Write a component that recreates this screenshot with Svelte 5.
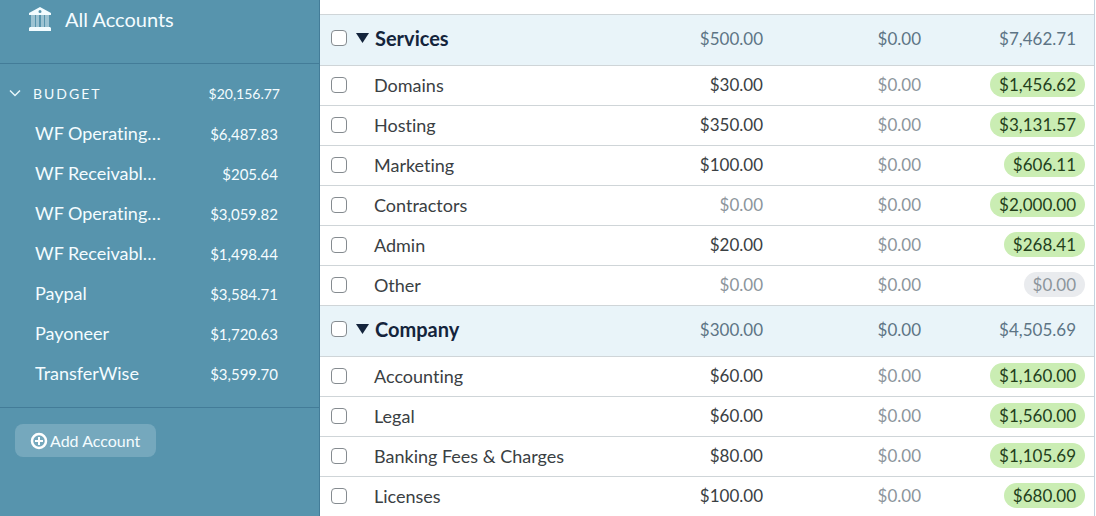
<script lang="ts">
  type Account = { name: string; balance: string };
  type Category = { name: string; budgeted: string; activity: string; available: string };
  type Group = Category & { items: Category[] };

  const accounts: Account[] = [
    { name: 'WF Operating…', balance: '$6,487.83' },
    { name: 'WF Receivabl…', balance: '$205.64' },
    { name: 'WF Operating…', balance: '$3,059.82' },
    { name: 'WF Receivabl…', balance: '$1,498.44' },
    { name: 'Paypal', balance: '$3,584.71' },
    { name: 'Payoneer', balance: '$1,720.63' },
    { name: 'TransferWise', balance: '$3,599.70' },
  ];

  const groups: Group[] = [
    {
      name: 'Services',
      budgeted: '$500.00',
      activity: '$0.00',
      available: '$7,462.71',
      items: [
        { name: 'Domains', budgeted: '$30.00', activity: '$0.00', available: '$1,456.62' },
        { name: 'Hosting', budgeted: '$350.00', activity: '$0.00', available: '$3,131.57' },
        { name: 'Marketing', budgeted: '$100.00', activity: '$0.00', available: '$606.11' },
        { name: 'Contractors', budgeted: '$0.00', activity: '$0.00', available: '$2,000.00' },
        { name: 'Admin', budgeted: '$20.00', activity: '$0.00', available: '$268.41' },
        { name: 'Other', budgeted: '$0.00', activity: '$0.00', available: '$0.00' },
      ],
    },
    {
      name: 'Company',
      budgeted: '$300.00',
      activity: '$0.00',
      available: '$4,505.69',
      items: [
        { name: 'Accounting', budgeted: '$60.00', activity: '$0.00', available: '$1,160.00' },
        { name: 'Legal', budgeted: '$60.00', activity: '$0.00', available: '$1,560.00' },
        { name: 'Banking Fees & Charges', budgeted: '$80.00', activity: '$0.00', available: '$1,105.69' },
        { name: 'Licenses', budgeted: '$100.00', activity: '$0.00', available: '$680.00' },
      ],
    },
  ];

  let budgetOpen = $state(true);
  let open: Record<string, boolean> = $state({ Services: true, Company: true });

  const isZero = (amount: string) => amount === '$0.00';
</script>

<div class="app">
  <aside class="sidebar">
    <nav class="top">
      <a class="all" href="#accounts">
        <svg width="24" height="26" viewBox="0 0 24 26" fill="#f2fcff" aria-hidden="true">
          <path fill-rule="evenodd" d="M12 1 23 7V9H1V7ZM12 4a1.500 1.500 0 1 0 0 3 1.500 1.500 0 0 0 0-3Z" />
          <path opacity=".45" d="M3 9h4v12H3zM8 9h3v12H8zM13 9h3v12h-3zM17 9h4v12h-4z" />
          <path d="M2 21h20l1 1v3H1v-3z" />
        </svg>
        All Accounts
      </a>
    </nav>

    <section class="budget">
      <button class="budget-head" aria-expanded={budgetOpen} onclick={() => (budgetOpen = !budgetOpen)}>
        <svg width="12" height="8" viewBox="0 0 12 8" fill="none" stroke="#e6f6fa" stroke-width="1.500" aria-hidden="true">
          <path d="M1 1.500 6 6.500 11 1.500" />
        </svg>
        <span class="title">BUDGET</span>
        <span>$20,156.77</span>
      </button>
      {#if budgetOpen}
        <ul>
          {#each accounts as account}
            <li>
              <a href="#account">
                <span>{account.name}</span>
                <span class="balance">{account.balance}</span>
              </a>
            </li>
          {/each}
        </ul>
      {/if}
    </section>

    <button class="add">
      <svg width="18" height="18" viewBox="0 0 18 18" fill="none" stroke="#fff" aria-hidden="true">
        <circle cx="9" cy="9" r="7" stroke-width="2.500" />
        <path d="M9 5v8M5 9h8" stroke-width="2" />
      </svg>
      Add Account
    </button>
  </aside>

  <main>
    <table>
      <colgroup>
        <col class="c-check" />
        <col />
        <col class="c-amount" />
        <col class="c-amount" />
        <col class="c-available" />
      </colgroup>
      {#each groups as group}
        <tbody>
          <tr class="group">
            <td><input type="checkbox" aria-label={group.name} /></td>
            <th scope="rowgroup">
              <button class="toggle" aria-expanded={open[group.name]} onclick={() => (open[group.name] = !open[group.name])}>
                <svg width="13" height="10" viewBox="0 0 13 10" fill="#14243c" aria-hidden="true">
                  <path d="M0 0h13L6.500 10z" />
                </svg>
                {group.name}
              </button>
            </th>
            <td class="amount">{group.budgeted}</td>
            <td class="amount">{group.activity}</td>
            <td class="amount available">{group.available}</td>
          </tr>
          {#if open[group.name]}
            {#each group.items as item}
              <tr>
                <td><input type="checkbox" aria-label={item.name} /></td>
                <th scope="row">{item.name}</th>
                <td class="amount" class:zero={isZero(item.budgeted)}>{item.budgeted}</td>
                <td class="amount" class:zero={isZero(item.activity)}>{item.activity}</td>
                <td class="amount">
                  <span class="pill" class:empty={isZero(item.available)}>{item.available}</span>
                </td>
              </tr>
            {/each}
          {/if}
        </tbody>
      {/each}
    </table>
  </main>
</div>

<style>
  :global(body) {
    margin: 0;
    background: #fff;
  }

  .app {
    display: flex;
    height: 100vh;
    overflow: hidden;
    font-family: Lato, 'Liberation Sans', sans-serif;
    font-size: 18px;
    font-variant-ligatures: none;
    color: #3a4043;
  }

  button {
    font: inherit;
    color: inherit;
    border: none;
    background: none;
    padding: 0;
    cursor: pointer;
  }

  a {
    color: inherit;
    text-decoration: none;
  }

  .sidebar {
    box-sizing: border-box;
    flex: 0 0 320px;
    background: #5794ad;
    border-right: 1px solid #437c98;
    color: #f4fcff;
  }

  .top {
    height: 63px;
    border-bottom: 1px solid #437c98;
  }

  .all {
    display: flex;
    align-items: center;
    gap: 13px;
    padding: 6px 28px 0;
    font-size: 20px;
    line-height: 26px;
  }

  .budget {
    padding: 9px 0 14px;
    border-bottom: 1px solid #437c98;
  }

  .budget-head {
    display: flex;
    align-items: center;
    width: 100%;
    height: 40px;
    padding: 0 39px 0 9px;
    font-size: 14px;
  }

  .title {
    flex: 1;
    margin-left: 12px;
    text-align: left;
    letter-spacing: 2px;
  }

  ul {
    list-style: none;
    margin: 0;
    padding: 0;
  }

  li a {
    display: flex;
    align-items: baseline;
    justify-content: space-between;
    height: 40px;
    padding: 0 41px 0 35px;
    line-height: 40px;
  }

  .balance {
    font-size: 15px;
  }

  .add {
    display: flex;
    align-items: center;
    gap: 2px;
    height: 33px;
    margin: 16px 0 0 15px;
    padding: 0 16px 0 15px;
    border-radius: 8px;
    background: #75a8bd;
    font-size: 16px;
  }

  main {
    flex: 1;
    min-width: 0;
    padding-top: 14px;
    border-right: 1px solid #c3d3df;
    margin-right: 1px;
  }

  table {
    width: 100%;
    table-layout: fixed;
    border-collapse: separate;
    border-spacing: 0;
    border-top: 1px solid #cfd5d8;
  }

  .c-check {
    width: 36px;
  }

  .c-amount {
    width: 158px;
  }

  .c-available {
    width: 173px;
  }

  td,
  th {
    box-sizing: border-box;
    height: 40px;
    padding: 0 0 2px;
    border-bottom: 1px solid #cfd5d8;
    font-weight: 400;
    text-align: left;
  }

  th {
    padding-left: 18px;
  }

  .group td,
  .group th {
    height: 51px;
    padding-bottom: 4px;
    background: #e9f4f9;
    color: #5d7485;
  }

  .group th {
    padding-left: 0;
  }

  input {
    display: block;
    box-sizing: border-box;
    appearance: none;
    width: 16px;
    height: 16px;
    margin: 0 0 0 11px;
    border: 1px solid #858b90;
    border-radius: 4px;
    background: #fff;
  }

  input:checked {
    background: #5794ad;
  }

  .toggle {
    display: flex;
    align-items: center;
    gap: 6px;
    font-size: 20px;
    font-weight: 700;
    color: #14243c;
  }

  td.amount {
    font-size: 17px;
    text-align: right;
  }

  td.amount:last-child {
    padding-right: 9px;
  }

  .group td.available {
    padding-right: 18px;
  }

  td.zero {
    color: #8c959c;
  }

  .pill {
    display: inline-block;
    padding: 0 9px;
    border-radius: 13px;
    background: #caedb3;
    color: #233f1b;
    line-height: 25px;
  }

  .pill.empty {
    background: #e9ebee;
    color: #8c959c;
  }
</style>
